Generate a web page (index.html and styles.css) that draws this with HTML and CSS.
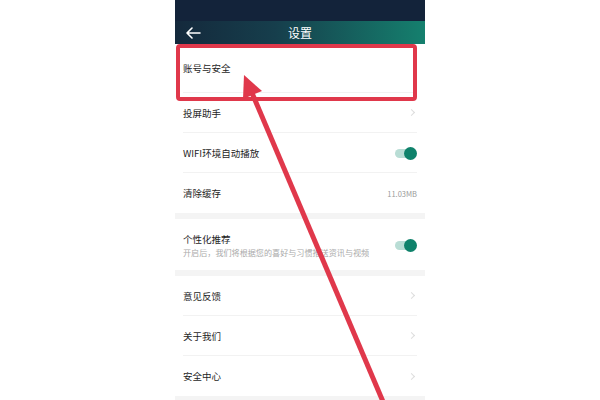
FILE: index.html
```html
<!DOCTYPE html>
<html lang="zh-CN">
<head>
    <meta charset="UTF-8">
    <title>设置</title>
    <link rel="stylesheet" href="styles.css">
</head>
<body>
    <div class="phone">
        <div class="status-bar"></div>
        <div class="nav-bar">
            <svg class="back" width="16" height="12" viewBox="0 0 16 12">
                <path d="M15 6H2M7 1L2 6l5 5" fill="none" stroke="#fff" stroke-width="1.6" stroke-linecap="round" stroke-linejoin="round"/>
            </svg>
            <span class="title">设置</span>
        </div>

        <div class="group">
            <div class="row row-first"><span>账号与安全</span></div>
            <div class="row"><span>投屏助手</span><i class="chevron"></i></div>
            <div class="row"><span>WIFI环境自动播放</span><span class="toggle"></span></div>
            <div class="row"><span>清除缓存</span><span class="value">11.03MB</span></div>
        </div>
        <div class="gap"></div>
        <div class="group">
            <div class="row row-tall">
                <div class="text">
                    <span>个性化推荐</span>
                    <span class="sub">开启后，我们将根据您的喜好与习惯推送资讯与视频</span>
                </div>
                <span class="toggle"></span>
            </div>
        </div>
        <div class="gap"></div>
        <div class="group">
            <div class="row"><span>意见反馈</span><i class="chevron"></i></div>
            <div class="row"><span>关于我们</span><i class="chevron"></i></div>
            <div class="row"><span>安全中心</span><i class="chevron"></i></div>
        </div>
        <div class="gap"></div>
    </div>

    <!-- annotation drawn over the screenshot -->
    <svg class="marks" width="600" height="400" viewBox="0 0 600 400">
        <rect x="178" y="46" width="237" height="53" rx="2" fill="none" stroke="#e0384b" stroke-width="4"/>
        <line x1="384" y1="404" x2="252" y2="93" stroke="#e0384b" stroke-width="5"/>
        <polygon points="244,75 262,91 243,99" fill="#e0384b"/>
    </svg>
</body>
</html>
```

FILE: styles.css
```css
body {
    margin: 0;
    width: 600px;
    height: 400px;
    overflow: hidden;
    background: #fff;
    font-family: "Noto Sans CJK SC", "Noto Sans", sans-serif;
    color: #1e1e1e;
    position: relative;
}

.phone {
    width: 250px;
    margin-left: 175px;
    background: #fff;
}

.status-bar {
    height: 21px;
    background: #13233a;
}

.nav-bar {
    height: 23px;
    display: flex;
    align-items: center;
    justify-content: center;
    position: relative;
    background: linear-gradient(to right, #14293c 0%, #163e4c 40%, #15806e 100%);
}

.back {
    position: absolute;
    left: 10px;
    top: 6px;
}

.title {
    color: #fff;
    font-size: 12px;
}

.group {
    padding: 0 8px;
}

.row {
    box-sizing: border-box;
    height: 40px;
    display: flex;
    align-items: center;
    justify-content: space-between;
    font-size: 9.5px;
    border-bottom: 1px solid #f2f2f2;
}

.row:last-child {
    border-bottom: none;
}

.row-first {
    height: 49px;
}

.row-tall {
    height: 51px;
}

.text {
    display: flex;
    flex-direction: column;
    gap: 1px;
}

.sub {
    font-size: 8.1px;
    color: #aaa;
}

.value {
    font-size: 7.5px;
    color: #999;
}

.chevron {
    width: 4px;
    height: 4px;
    border-top: 1px solid #ddd;
    border-right: 1px solid #ddd;
    transform: rotate(45deg);
    margin-right: 3px;
}

.toggle {
    width: 22px;
    height: 12px;
    position: relative;
}

.toggle::before {
    content: "";
    position: absolute;
    left: 0;
    top: 2px;
    width: 18px;
    height: 9px;
    border-radius: 5px;
    background: #b9ddd5;
}

.toggle::after {
    content: "";
    position: absolute;
    right: 0;
    top: 0;
    width: 13px;
    height: 13px;
    border-radius: 50%;
    background: #0f826b;
}

.gap {
    height: 6px;
    background: #f4f4f4;
}

.marks {
    position: absolute;
    left: 0;
    top: 0;
}
```
